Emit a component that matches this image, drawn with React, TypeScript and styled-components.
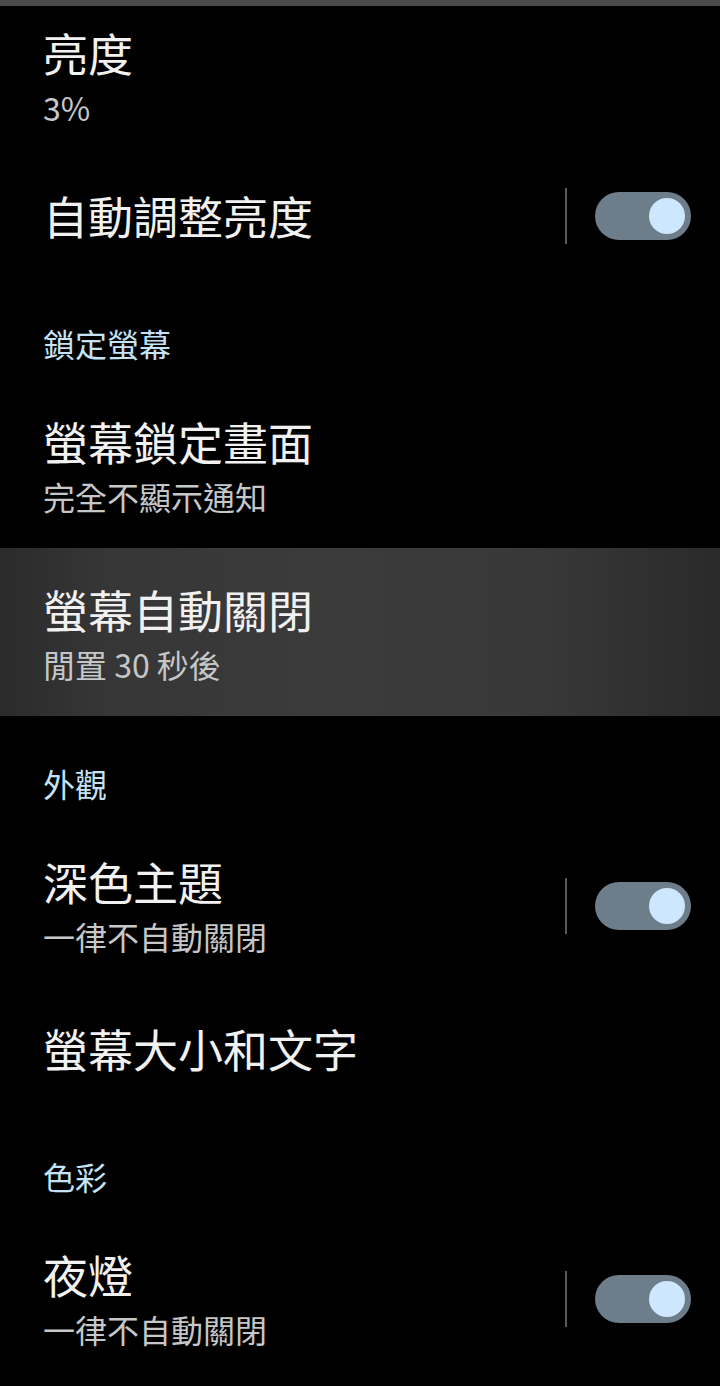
import React from "react";
import styled, { createGlobalStyle } from "styled-components";

const Global = createGlobalStyle`
  html, body { margin: 0; padding: 0; background: #000; }
  body { font-family: "Noto Sans CJK TC", "Noto Sans", sans-serif; }
`;

const Screen = styled.div`
  width: 720px;
  min-height: 1386px;
  background: #000;
  display: flex;
  flex-direction: column;
  overflow: hidden;
`;

const TopBar = styled.div`
  height: 6px;
  background: #4a4a4c;
  flex: none;
`;

const Row = styled.div<{ $highlight?: boolean; $first?: boolean; $single?: boolean }>`
  display: flex;
  align-items: center;
  padding: ${(p) => (p.$first ? "17px 29px 24px 43px" : p.$single ? "31px 29px 30px 43px" : "32px 29px 28px 43px")};
  background: ${(p) =>
    p.$highlight
      ? "linear-gradient(90deg, #2b2b2b 0%, #363636 15%, #3b3b3b 45%, #383838 75%, #2a2a2a 100%)"
      : "transparent"};
`;

const TextCol = styled.div`
  flex: 1;
  display: flex;
  flex-direction: column;
  min-width: 0;
`;

const Title = styled.div`
  font-size: 45px;
  line-height: 60px;
  color: #f1f1f1;
  white-space: nowrap;
`;

const Summary = styled.div`
  font-size: 32px;
  line-height: 48px;
  color: #c5c7c9;
  white-space: nowrap;
`;

const Header = styled.div`
  height: 104px;
  box-sizing: border-box;
  padding: 46px 43px 0;
  font-size: 32px;
  line-height: 42px;
  color: #c6e2f7;
`;

const Divider = styled.div`
  width: 2px;
  height: 56px;
  background: #5a5a5a;
  margin-right: 28px;
`;

const Track = styled.div`
  width: 96px;
  height: 48px;
  border-radius: 24px;
  background: #6d7d8a;
  display: flex;
  align-items: center;
  justify-content: flex-end;
  padding: 0 6px;
  box-sizing: border-box;
`;

const Thumb = styled.div`
  width: 36px;
  height: 36px;
  border-radius: 50%;
  background: #cde7fe;
`;

const Toggle = () => (
  <>
    <Divider />
    <Track>
      <Thumb />
    </Track>
  </>
);

export default function App() {
  return (
    <Screen>
      <Global />
      <TopBar />
      <Row $first>
        <TextCol>
          <Title>亮度</Title>
          <Summary>3%</Summary>
        </TextCol>
      </Row>
      <Row $single>
        <TextCol>
          <Title>自動調整亮度</Title>
        </TextCol>
        <Toggle />
      </Row>
      <Header>鎖定螢幕</Header>
      <Row>
        <TextCol>
          <Title>螢幕鎖定畫面</Title>
          <Summary>完全不顯示通知</Summary>
        </TextCol>
      </Row>
      <Row $highlight>
        <TextCol>
          <Title>螢幕自動關閉</Title>
          <Summary>閒置 30 秒後</Summary>
        </TextCol>
      </Row>
      <Header>外觀</Header>
      <Row>
        <TextCol>
          <Title>深色主題</Title>
          <Summary>一律不自動關閉</Summary>
        </TextCol>
        <Toggle />
      </Row>
      <Row $single>
        <TextCol>
          <Title>螢幕大小和文字</Title>
        </TextCol>
      </Row>
      <Header>色彩</Header>
      <Row>
        <TextCol>
          <Title>夜燈</Title>
          <Summary>一律不自動關閉</Summary>
        </TextCol>
        <Toggle />
      </Row>
    </Screen>
  );
}
